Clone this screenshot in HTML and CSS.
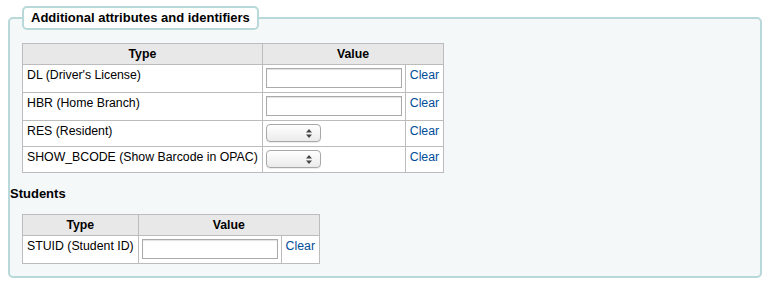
FILE: index.html
```html
<!DOCTYPE html>
<html lang="en">
<head>
    <meta charset="UTF-8">
    <title>Additional attributes and identifiers</title>
    <link rel="stylesheet" href="styles.css">
</head>
<body>
    <fieldset class="rows">
        <legend>Additional attributes and identifiers</legend>

        <table class="attributes">
            <thead>
                <tr>
                    <th>Type</th>
                    <th colspan="2">Value</th>
                </tr>
            </thead>
            <tbody>
                <tr>
                    <td class="type">DL (Driver's License)</td>
                    <td class="value"><input type="text" class="text-input"></td>
                    <td class="clear"><a href="#">Clear</a></td>
                </tr>
                <tr>
                    <td class="type">HBR (Home Branch)</td>
                    <td class="value"><input type="text" class="text-input"></td>
                    <td class="clear"><a href="#">Clear</a></td>
                </tr>
                <tr>
                    <td class="type">RES (Resident)</td>
                    <td class="value">
                        <span class="select-wrap">
                            <select class="select-input"><option value=""></option></select>
                            <svg class="select-arrows" width="6" height="9" viewBox="0 0 6 9"><path d="M3 0 L6 3.5 L0 3.5 Z M3 9 L6 5.5 L0 5.5 Z" fill="#444"/></svg>
                        </span>
                    </td>
                    <td class="clear"><a href="#">Clear</a></td>
                </tr>
                <tr>
                    <td class="type">SHOW_BCODE (Show Barcode in OPAC)</td>
                    <td class="value">
                        <span class="select-wrap">
                            <select class="select-input"><option value=""></option></select>
                            <svg class="select-arrows" width="6" height="9" viewBox="0 0 6 9"><path d="M3 0 L6 3.5 L0 3.5 Z M3 9 L6 5.5 L0 5.5 Z" fill="#444"/></svg>
                        </span>
                    </td>
                    <td class="clear"><a href="#">Clear</a></td>
                </tr>
            </tbody>
        </table>

        <h3>Students</h3>

        <table class="attributes">
            <thead>
                <tr>
                    <th>Type</th>
                    <th colspan="2">Value</th>
                </tr>
            </thead>
            <tbody>
                <tr>
                    <td class="type">STUID (Student ID)</td>
                    <td class="value"><input type="text" class="text-input"></td>
                    <td class="clear"><a href="#">Clear</a></td>
                </tr>
            </tbody>
        </table>
    </fieldset>
</body>
</html>
```

FILE: styles.css
```css
body {
    font-family: "Liberation Sans", Arial, sans-serif;
    font-size: 12.3px;
    color: #000;
    background-color: #fff;
    margin: 6px 7px 0 8px;
}
fieldset.rows {
    background-color: #f4f8f9;
    border: 2px solid #b9d8d9;
    border-radius: 5px;
    margin: 0;
    padding: 13px 0 12px 0;
}
legend {
    background-color: #fff;
    border: 2px solid #b9d8d9;
    border-radius: 5px;
    margin-left: 12px;
    padding: 3px 7px;
    font-size: 13px;
    font-weight: bold;
    line-height: 14px;
}
h3 {
    font-size: 13px;
    font-weight: bold;
    line-height: 15px;
    margin: 13px 0 13px 0;
}
table.attributes {
    border-collapse: collapse;
    margin-left: 12px;
    background-color: #fff;
}
table.attributes th,
table.attributes td {
    border: 1px solid #bcbcbc;
    line-height: 14px;
}
table.attributes th {
    background-color: #e8e8e8;
    font-weight: bold;
    text-align: center;
    padding: 3px 4px;
}
table.attributes td {
    padding: 3px 4px 4px;
    vertical-align: top;
    white-space: nowrap;
}
table.attributes td.value {
    padding: 3px 3px 4px 3px;
}
.clear a {
    color: #004d99;
    text-decoration: none;
}
.text-input {
    display: block;
    box-sizing: border-box;
    width: 136px;
    height: 20px;
    margin: 0;
    border: 1px solid #aaa;
    box-shadow: inset 0 1px 1px rgba(0, 0, 0, 0.12);
    background: #fff;
    padding: 2px 3px;
}
.select-wrap {
    display: block;
    position: relative;
    width: 55px;
    height: 18px;
}
.select-input {
    -webkit-appearance: none;
    appearance: none;
    box-sizing: border-box;
    width: 55px;
    height: 18px;
    margin: 0;
    border: 1px solid #a8a8a8;
    border-radius: 4px;
    background: linear-gradient(#ffffff, #ebebeb);
    box-shadow: 0 1px 1px rgba(0, 0, 0, 0.08);
}
.select-arrows {
    position: absolute;
    right: 9px;
    top: 5px;
    pointer-events: none;
}
```
